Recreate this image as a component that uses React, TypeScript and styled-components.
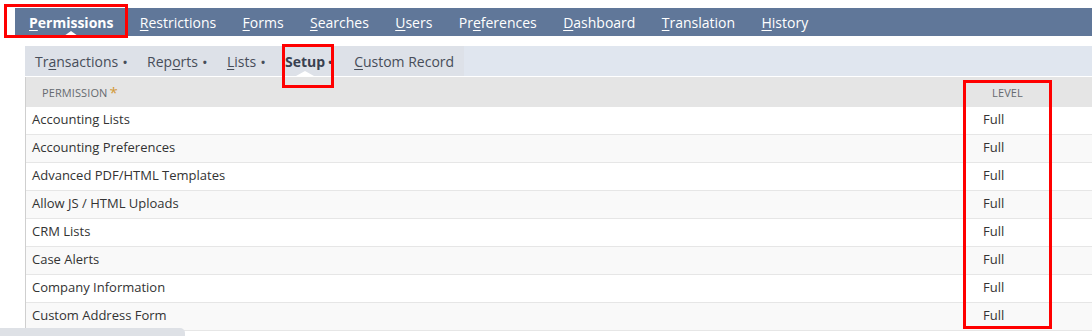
import React from "react";
import styled, { createGlobalStyle, css } from "styled-components";

const GlobalStyle = createGlobalStyle`
  html, body {
    margin: 0;
    padding: 0;
    background: #ffffff;
    font-family: "Open Sans", "Liberation Sans", Arial, sans-serif;
  }
`;

const Page = styled.div`
  position: relative;
  width: 1092px;
  height: 336px;
  overflow: hidden;
  padding-top: 8px;
  box-sizing: border-box;
`;

/* main tab bar */
const NavBar = styled.div`
  display: flex;
  align-items: center;
  height: 28px;
  margin-left: 15px;
  background: #607799;
`;

const caret = css`
  &::after {
    content: "";
    position: absolute;
    left: 50%;
    bottom: 0;
    transform: translateX(-50%);
    border-left: 7px solid transparent;
    border-right: 7px solid transparent;
    border-bottom: 5px solid #ffffff;
  }
`;

const NavItem = styled.div<{ $active?: boolean }>`
  position: relative;
  height: 100%;
  display: flex;
  align-items: center;
  padding: 0 13.2px 0 ${(p) => (p.$active ? "14px" : "13.2px")};
  color: #ffffff;
  font-size: 14px;
  font-weight: ${(p) => (p.$active ? 700 : 400)};
  white-space: nowrap;
  ${(p) => p.$active && caret}
`;

const Key = styled.span`
  text-decoration: underline;
  text-underline-offset: 2px;
`;

/* sub tab bar */
const SubBar = styled.div`
  display: flex;
  height: 30px;
  margin: 10px 0 0 25px;
  background: #e0e6ef;
`;

const SubTabs = styled.div`
  display: flex;
  align-items: center;
  background: #dde1e8;
`;

const SubItem = styled.div<{ $active?: boolean }>`
  position: relative;
  height: 100%;
  display: flex;
  align-items: center;
  padding: 0 ${(p) => (p.$active ? "11.8px" : "10px")} 0 10px;
  color: ${(p) => (p.$active ? "#3a4150" : "#474d59")};
  font-size: 14px;
  font-weight: ${(p) => (p.$active ? 700 : 400)};
  white-space: nowrap;
  ${(p) =>
    p.$active &&
    css`
      &::after {
        content: "";
        position: absolute;
        left: 30px;
        bottom: 0;
        transform: translateX(-50%);
        border-left: 9px solid transparent;
        border-right: 9px solid transparent;
        border-bottom: 5px solid #ffffff;
      }
    `}
`;

const Dot = styled.span<{ $tight?: boolean }>`
  margin-left: ${(p) => (p.$tight ? "3px" : "4.8px")};
  font-size: 11px;
  font-weight: 700;
`;

/* permission table */
const Table = styled.div`
  margin: 1px 0 0 25px;
  border-left: 1px solid #cfcfcf;
`;

const Row = styled.div<{ $head?: boolean; $odd?: boolean }>`
  display: grid;
  grid-template-columns: 1fr 65px 52px;
  align-items: center;
  height: ${(p) => (p.$head ? "30px" : "28px")};
  box-sizing: border-box;
  background: ${(p) => (p.$head ? "#e5e5e5" : p.$odd ? "#f9f9f9" : "#ffffff")};
  border-bottom: ${(p) => (p.$head ? "none" : "1px solid #e6e6e6")};
`;

const HeadCell = styled.div<{ $center?: boolean }>`
  padding-left: ${(p) => (p.$center ? "0" : "16px")};
  text-align: ${(p) => (p.$center ? "center" : "left")};
  font-size: 11px;
  color: #666a70;
  text-transform: uppercase;
  letter-spacing: 0.1px;
`;

const Star = styled.span`
  margin-left: 2px;
  color: #d39a3a;
  font-size: 15px;
  vertical-align: -1px;
`;

const Cell = styled.div<{ $level?: boolean }>`
  padding-left: ${(p) => (p.$level ? "8px" : "6px")};
  font-size: 13px;
  color: #333333;
  padding-bottom: 4px;
`;

/* browser status pill at the bottom */
const StatusPill = styled.div`
  position: absolute;
  left: 0;
  bottom: 0;
  width: 185px;
  height: 8px;
  background: #dee1e6;
  border-top-right-radius: 5px;
`;

/* red annotation boxes drawn over the screenshot */
const Mark = styled.div<{ $x: number; $y: number; $w: number; $h: number }>`
  position: absolute;
  left: ${(p) => p.$x}px;
  top: ${(p) => p.$y}px;
  width: ${(p) => p.$w}px;
  height: ${(p) => p.$h}px;
  border: 3px solid #ff0000;
  box-sizing: border-box;
  pointer-events: none;
`;

const tabs: { pre: string; key: string; post: string; active?: boolean }[] = [
  { pre: "", key: "P", post: "ermissions", active: true },
  { pre: "", key: "R", post: "estrictions" },
  { pre: "", key: "F", post: "orms" },
  { pre: "", key: "S", post: "earches" },
  { pre: "", key: "U", post: "sers" },
  { pre: "Pr", key: "e", post: "ferences" },
  { pre: "", key: "D", post: "ashboard" },
  { pre: "", key: "T", post: "ranslation" },
  { pre: "", key: "H", post: "istory" },
];

const subTabs: { pre: string; key: string; post: string; dot: boolean; active?: boolean }[] = [
  { pre: "Tr", key: "a", post: "nsactions", dot: true },
  { pre: "Rep", key: "o", post: "rts", dot: true },
  { pre: "", key: "L", post: "ists", dot: true },
  { pre: "Setup", key: "", post: "", dot: true, active: true },
  { pre: "", key: "C", post: "ustom Record", dot: false },
];

const permissions = [
  "Accounting Lists",
  "Accounting Preferences",
  "Advanced PDF/HTML Templates",
  "Allow JS / HTML Uploads",
  "CRM Lists",
  "Case Alerts",
  "Company Information",
  "Custom Address Form",
];

export default function App() {
  return (
    <Page>
      <GlobalStyle />
      <NavBar>
        {tabs.map((t) => (
          <NavItem key={t.post} $active={t.active}>
            {t.pre}
            <Key>{t.key}</Key>
            {t.post}
          </NavItem>
        ))}
      </NavBar>

      <SubBar>
        <SubTabs>
          {subTabs.map((t) => (
            <SubItem key={t.pre + t.post} $active={t.active}>
              {t.pre}
              {t.key && <Key>{t.key}</Key>}
              {t.post}
              {t.dot && <Dot $tight={t.active}>•</Dot>}
            </SubItem>
          ))}
        </SubTabs>
      </SubBar>

      <Table>
        <Row $head>
          <HeadCell>
            Permission<Star>*</Star>
          </HeadCell>
          <HeadCell $center>Level</HeadCell>
          <div />
        </Row>
        {permissions.map((name, i) => (
          <Row key={name} $odd={i % 2 === 1}>
            <Cell>{name}</Cell>
            <Cell $level>Full</Cell>
            <div />
          </Row>
        ))}
      </Table>

      <StatusPill />

      <Mark $x={4} $y={4} $w={124} $h={34} />
      <Mark $x={282} $y={44} $w={52} $h={44} />
      <Mark $x={963} $y={80} $w={89} $h={249} />
    </Page>
  );
}
